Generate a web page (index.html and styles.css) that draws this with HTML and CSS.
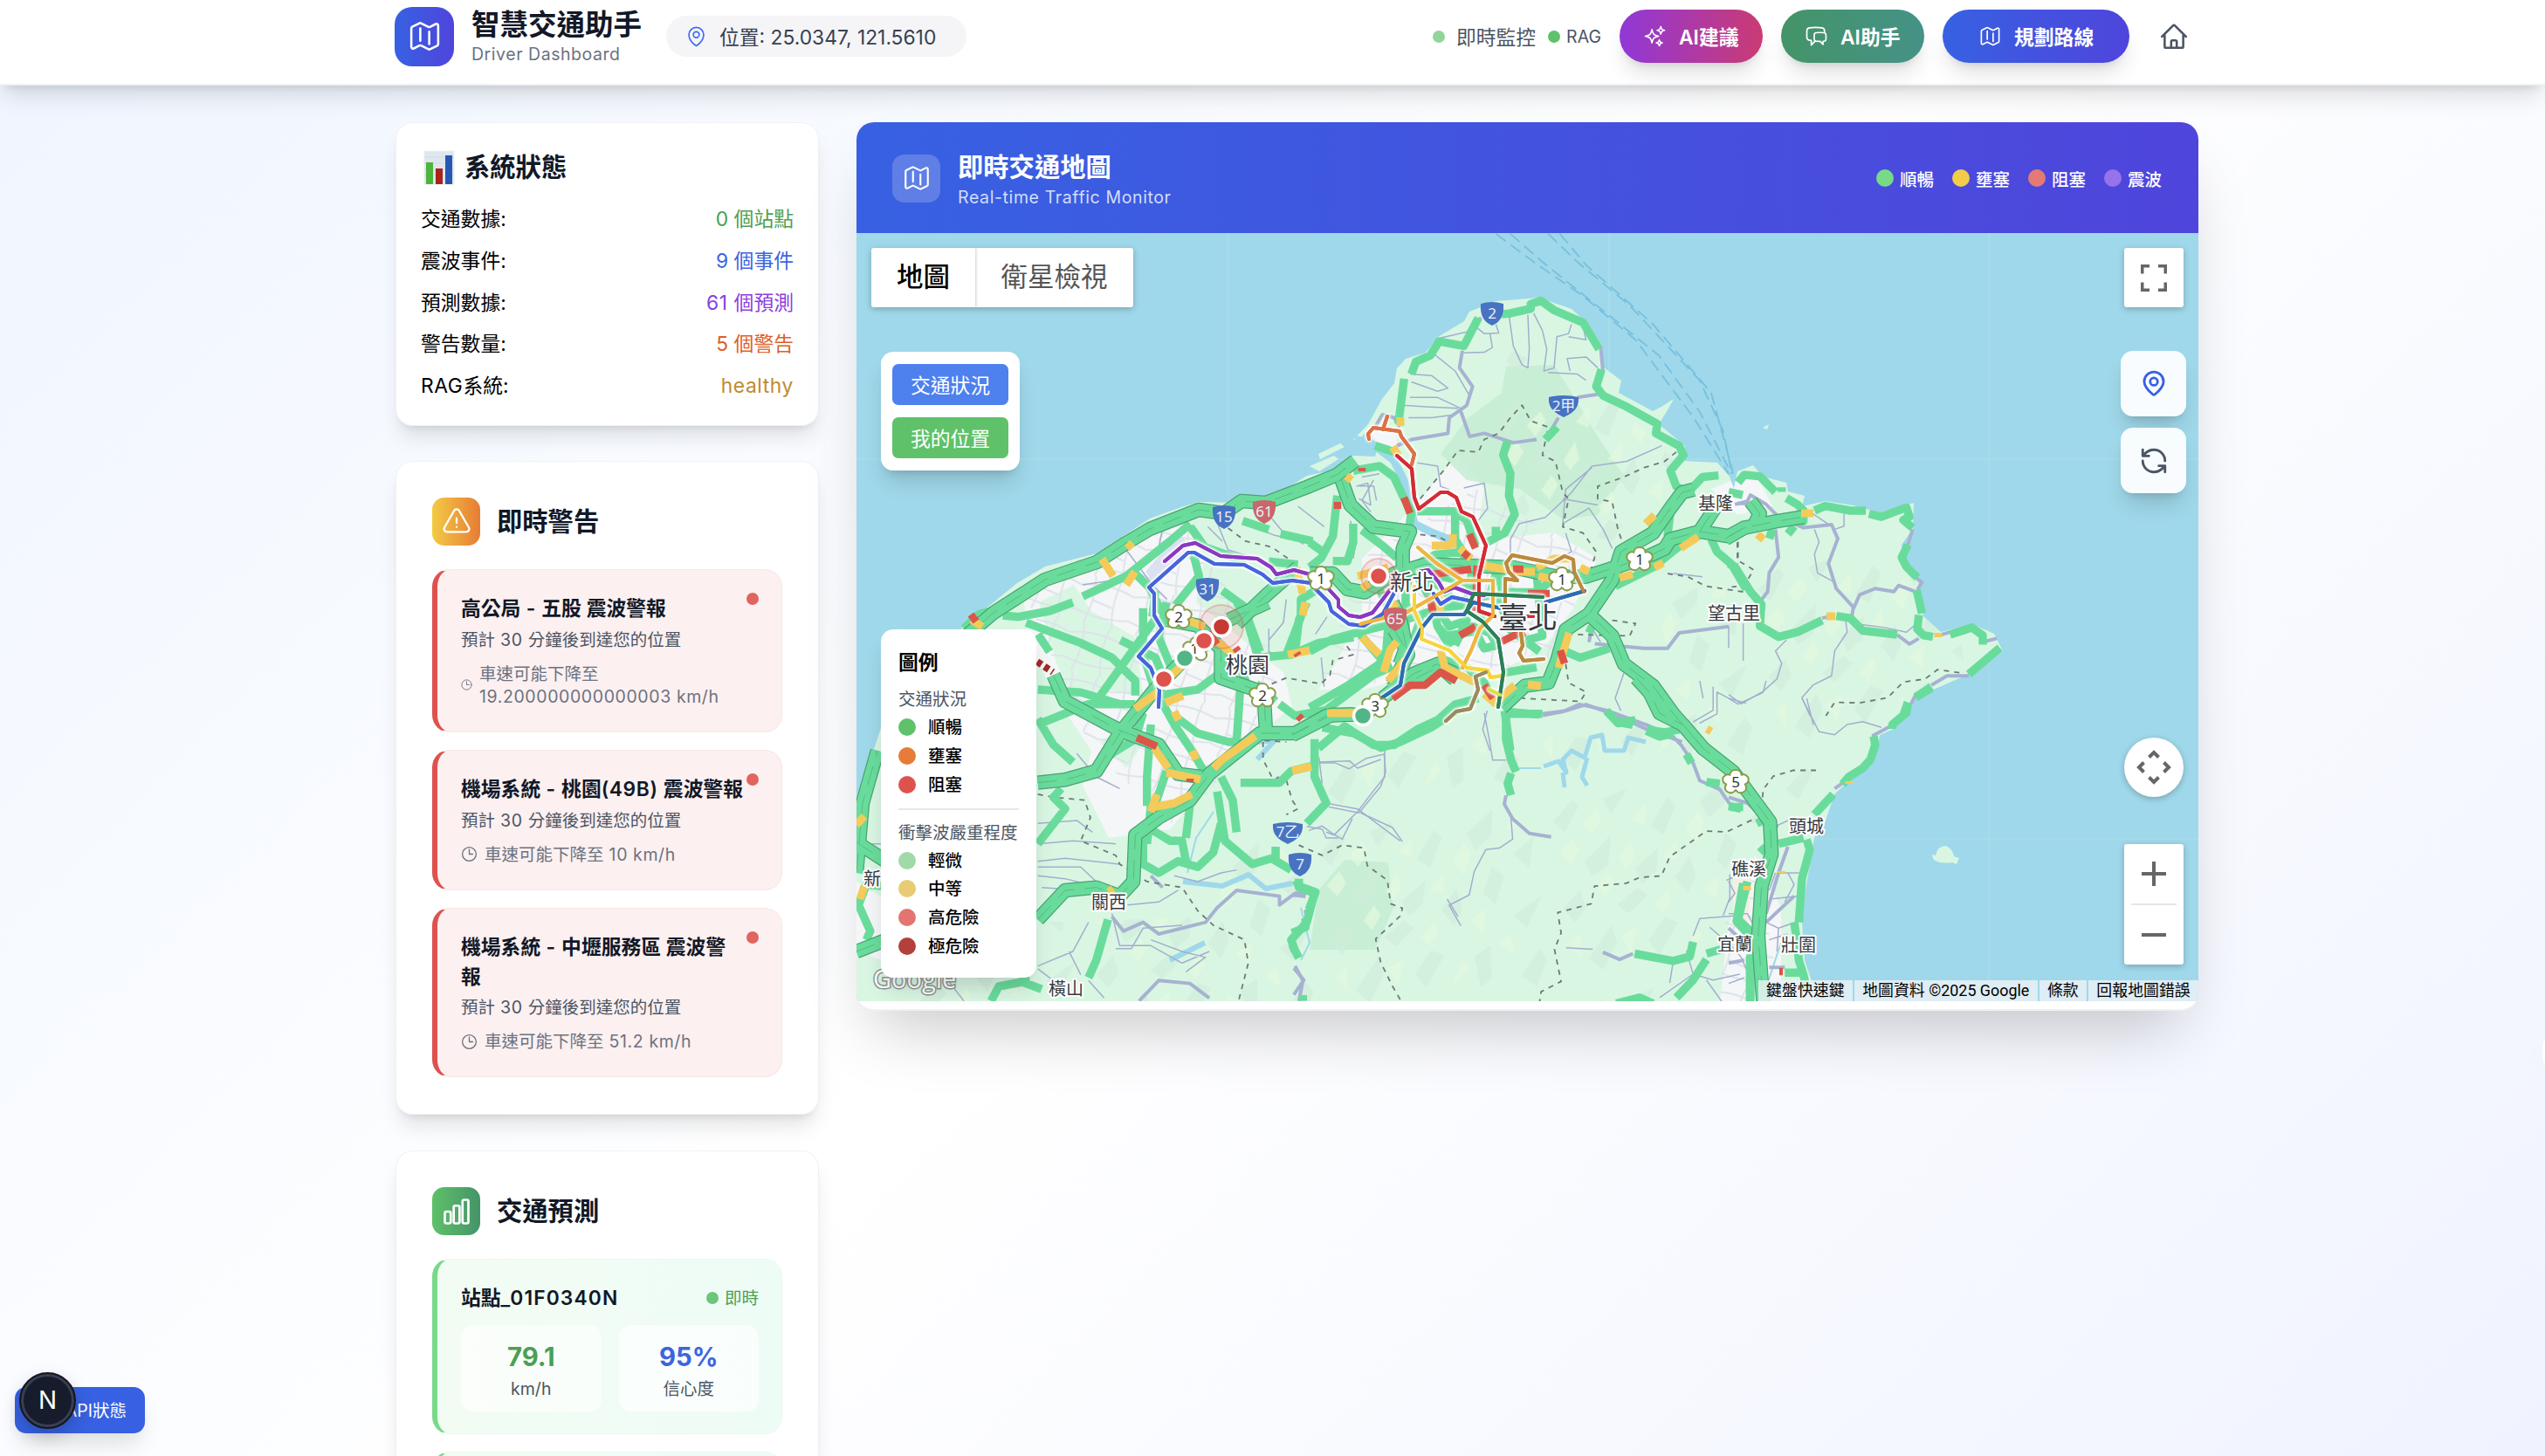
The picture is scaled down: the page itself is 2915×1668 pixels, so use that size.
FILE: index.html
```html
<!DOCTYPE html>
<html lang="zh-Hant">
<head>
<meta charset="utf-8">
<title>智慧交通助手</title>
<link rel="stylesheet" href="styles.css">
</head>
<body>
<svg class="defs" width="0" height="0" aria-hidden="true">
  <symbol id="i-map" viewBox="0 0 24 24"><path d="M9 6.75V15m6-6v8.25m.503 3.498 4.875-2.437c.381-.19.622-.58.622-1.006V4.82c0-.836-.88-1.38-1.628-1.006l-3.869 1.934c-.317.159-.69.159-1.006 0L9.503 3.252a1.125 1.125 0 0 0-1.006 0L3.622 5.689C3.24 5.88 3 6.27 3 6.695V19.18c0 .836.88 1.38 1.628 1.006l3.869-1.934c.317-.159.69-.159 1.006 0l4.994 2.497c.317.158.69.158 1.006 0Z"/></symbol>
  <symbol id="i-pin" viewBox="0 0 24 24"><path d="M15 10.5a3 3 0 1 1-6 0 3 3 0 0 1 6 0Z"/><path d="M19.5 10.5c0 7.142-7.5 11.25-7.5 11.25S4.5 17.642 4.5 10.5a7.5 7.5 0 1 1 15 0Z"/></symbol>
  <symbol id="i-spark" viewBox="0 0 24 24"><path d="M9.813 15.904 9 18.75l-.813-2.846a4.5 4.5 0 0 0-3.09-3.09L2.25 12l2.846-.813a4.5 4.5 0 0 0 3.09-3.09L9 5.25l.813 2.846a4.5 4.5 0 0 0 3.09 3.09L15.75 12l-2.846.813a4.5 4.5 0 0 0-3.09 3.09ZM18.259 8.715 18 9.75l-.259-1.035a3.375 3.375 0 0 0-2.455-2.456L14.25 6l1.036-.259a3.375 3.375 0 0 0 2.455-2.456L18 2.25l.259 1.035a3.375 3.375 0 0 0 2.456 2.456L21.75 6l-1.035.259a3.375 3.375 0 0 0-2.456 2.456ZM16.894 20.567 16.5 21.75l-.394-1.183a2.25 2.25 0 0 0-1.423-1.423L13.5 18.75l1.183-.394a2.25 2.25 0 0 0 1.423-1.423l.394-1.183.394 1.183a2.25 2.25 0 0 0 1.423 1.423l1.183.394-1.183.394a2.25 2.25 0 0 0-1.423 1.423Z"/></symbol>
  <symbol id="i-chat" viewBox="0 0 24 24"><path d="M20.25 8.511c.884.284 1.5 1.128 1.5 2.097v4.286c0 1.136-.847 2.1-1.98 2.193-.34.027-.68.052-1.02.072v3.091l-3-3c-1.354 0-2.694-.055-4.02-.163a2.115 2.115 0 0 1-.825-.242m9.345-8.334a2.126 2.126 0 0 0-.476-.095 48.64 48.64 0 0 0-8.048 0c-1.131.094-1.976 1.057-1.976 2.192v4.286c0 .837.46 1.58 1.155 1.951m9.345-8.334V6.637c0-1.621-1.152-3.026-2.76-3.235A48.455 48.455 0 0 0 11.25 3c-2.115 0-4.198.137-6.24.402-1.608.209-2.76 1.614-2.76 3.235v6.226c0 1.621 1.152 3.026 2.76 3.235.577.075 1.157.14 1.74.194V21l4.155-4.155"/></symbol>
  <symbol id="i-home" viewBox="0 0 24 24"><path d="m2.25 12 8.954-8.955c.44-.439 1.152-.439 1.591 0L21.75 12M4.5 9.75v10.125c0 .621.504 1.125 1.125 1.125H9.75v-4.875c0-.621.504-1.125 1.125-1.125h2.25c.621 0 1.125.504 1.125 1.125V21h4.125c.621 0 1.125-.504 1.125-1.125V9.75M8.25 21h8.25"/></symbol>
  <symbol id="i-warn" viewBox="0 0 24 24"><path d="M12 9v3.75m-9.303 3.376c-.866 1.5.217 3.374 1.948 3.374h14.71c1.73 0 2.813-1.874 1.948-3.374L13.949 3.378c-.866-1.5-3.032-1.5-3.898 0L2.697 16.126ZM12 15.75h.007v.008H12v-.008Z"/></symbol>
  <symbol id="i-clock" viewBox="0 0 24 24"><path d="M12 6v6h4.5m4.5 0a9 9 0 1 1-18 0 9 9 0 0 1 18 0Z"/></symbol>
  <symbol id="i-bars" viewBox="0 0 24 24"><path d="M3 13.125C3 12.504 3.504 12 4.125 12h2.25c.621 0 1.125.504 1.125 1.125v6.75C7.5 20.496 6.996 21 6.375 21h-2.25A1.125 1.125 0 0 1 3 19.875v-6.75ZM9.75 8.625c0-.621.504-1.125 1.125-1.125h2.25c.621 0 1.125.504 1.125 1.125v11.25c0 .621-.504 1.125-1.125 1.125h-2.25a1.125 1.125 0 0 1-1.125-1.125V8.625ZM16.5 4.125c0-.621.504-1.125 1.125-1.125h2.25C20.496 3 21 3.504 21 4.125v15.75c0 .621-.504 1.125-1.125 1.125h-2.25a1.125 1.125 0 0 1-1.125-1.125V4.125Z"/></symbol>
  <symbol id="i-mappin" viewBox="0 0 24 24"><path d="M19.800 10c0 4.400-5 8.700-6.900 10.300a1.500 1.500 0 0 1-1.800 0C9.200 18.700 4.200 14.400 4.200 10a7.800 7.800 0 0 1 15.600 0Z"/><circle cx="12" cy="10" r="3"/></symbol>
  <symbol id="i-refresh" viewBox="0 0 24 24"><path d="M21 12a9 9 0 0 0-9-9 9.750 9.750 0 0 0-6.740 2.740L3 8M3 3v5h5M3 12a9 9 0 0 0 9 9 9.750 9.750 0 0 0 6.740-2.740L21 16M16 16h5v5"/></symbol>
</svg>

<header class="topbar">
  <div class="topbar-inner">
    <div class="logo"><svg class="ico" width="41" height="41"><use href="#i-map"/></svg></div>
    <div class="brand"><h1>智慧交通助手</h1><p>Driver Dashboard</p></div>
    <div class="pill"><svg class="ico" width="27" height="27"><use href="#i-pin"/></svg><span>位置: 25.0347, 121.5610</span></div>
    <div class="live"><i class="dot soft"></i><span>即時監控</span></div>
    <div class="rag"><i class="dot"></i><span>RAG</span></div>
    <button class="btn violet"><svg class="ico" width="27" height="27"><use href="#i-spark"/></svg>AI建議</button>
    <button class="btn teal"><svg class="ico" width="27" height="27"><use href="#i-chat"/></svg>AI助手</button>
    <button class="btn blue"><svg class="ico" width="27" height="27"><use href="#i-map"/></svg>規劃路線</button>
    <svg class="ico home" width="34" height="34"><use href="#i-home"/></svg>
  </div>
</header>

<main class="layout">
  <aside class="side">
    <section class="card status">
      <h2><svg width="36" height="40" viewBox="0 0 36 40"><rect x="1" y="1" width="34" height="38" fill="#dfe6ee" stroke="#eceff3"/><path d="M1 8h34M1 15h34M1 22h34M1 29h34" stroke="#d2dbe4"/><rect x="3" y="14" width="8" height="25" fill="#4fb43a"/><rect x="14" y="21" width="8" height="18" fill="#a8241c"/><rect x="25" y="6" width="8" height="33" fill="#2458b4"/></svg>系統狀態</h2>
      <dl>
        <div><dt>交通數據:</dt><dd class="c-green">0 個站點</dd></div>
        <div><dt>震波事件:</dt><dd class="c-blue">9 個事件</dd></div>
        <div><dt>預測數據:</dt><dd class="c-purple"><span class="lat">61 </span>個預測</dd></div>
        <div><dt>警告數量:</dt><dd class="c-orange">5 個警告</dd></div>
        <div><dt><span class="lat">RAG</span>系統:</dt><dd class="c-amber lat">healthy</dd></div>
      </dl>
    </section>

    <section class="card panel">
      <div class="panel-head"><span class="badge warm"><svg class="ico" width="36" height="36"><use href="#i-warn"/></svg></span><h2>即時警告</h2></div>
      <article class="alert"><i class="ping"></i><h3>高公局<span class="lat"> - </span>五股 震波警報</h3><p>預計<span class="lat"> 30 </span>分鐘後到達您的位置</p>
        <div class="speed tight"><svg class="ico" width="15" height="15"><use href="#i-clock"/></svg><span>車速可能下降至<br><span class="lat">19.200000000000003 km/h</span></span></div></article>
      <article class="alert"><i class="ping"></i><h3>機場系統<span class="lat"> - </span>桃園<span class="lat">(49B) </span>震波警報</h3><p>預計<span class="lat"> 30 </span>分鐘後到達您的位置</p>
        <div class="speed"><svg class="ico" width="21" height="21"><use href="#i-clock"/></svg><span>車速可能下降至<span class="lat"> 10 km/h</span></span></div></article>
      <article class="alert"><i class="ping"></i><h3>機場系統<span class="lat"> - </span>中壢服務區 震波警<br>報</h3><p>預計<span class="lat"> 30 </span>分鐘後到達您的位置</p>
        <div class="speed"><svg class="ico" width="21" height="21"><use href="#i-clock"/></svg><span>車速可能下降至<span class="lat"> 51.2 km/h</span></span></div></article>
    </section>

    <section class="card panel">
      <div class="panel-head"><span class="badge leaf"><svg class="ico bold" width="36" height="36"><use href="#i-bars"/></svg></span><h2>交通預測</h2></div>
      <article class="forecast">
        <div class="forecast-head"><h3>站點<span class="lat code">_01F0340N</span></h3><span class="now"><i class="dot"></i>即時</span></div>
        <div class="metrics">
          <div><b class="c-green">79.1</b><small>km/h</small></div>
          <div><b class="c-blue">95%</b><small>信心度</small></div>
        </div>
      </article>
      <article class="forecast next"></article>
    </section>
  </aside>

  <section class="mapcard">
    <div class="map-head">
      <span class="badge glass"><svg class="ico" width="34" height="34"><use href="#i-map"/></svg></span>
      <div class="map-title"><h2>即時交通地圖</h2><p>Real-time Traffic Monitor</p></div>
      <ul>
        <li><i style="background:#78da86"></i>順暢</li>
        <li><i style="background:#f2cd49"></i>壅塞</li>
        <li><i style="background:#e47a73"></i>阻塞</li>
        <li><i style="background:#9673ea"></i>震波</li>
      </ul>
    </div>
    <div class="map">
      <svg class="canvas" viewBox="981 267 1537 880" width="1537" height="880">
        <defs>
          <clipPath id="land-clip"><use href="#land"/></clipPath>
          <pattern id="facets" width="270" height="230" patternUnits="userSpaceOnUse" patternTransform="rotate(-8)">
            <path fill="#cfebda" opacity=".6" d="M10 30l26-22 6 8-20 28ZM70 12l30-8-22 26ZM120 50l24-30 8 10-18 32ZM40 80l34-26-8 34-20 10ZM96 96l30-20-6 26-18 12ZM8 130l22-18 4 20-14 16ZM70 134l26-16 10 10-24 18ZM140 112l20-22 4 24-12 18ZM180 30l34-24-6 30-20 14ZM230 60l26-16-10 34ZM190 100l14-30 12 14-14 30ZM220 130l36-18-22 34ZM30 190l30-34 4 20-20 30ZM100 180l22-24 14 8-26 34ZM170 170l20-10-4 38-14 8ZM220 200l24-28 8 12-16 30Z"/>
            <path fill="#e2f8df" opacity=".75" d="M44 36l18-14 4 12-14 16ZM100 40l18-16-4 24ZM14 66l16-14 6 14-12 14ZM80 82l16-20 2 20-12 12ZM130 88l18-18-2 22ZM50 112l14-16 6 12-12 16ZM112 140l18-16 2 14-12 12ZM160 60l16-20 6 14-12 22ZM224 30l16-14 4 16ZM170 130l20-12-6 26ZM70 170l20-8-12 30ZM140 200l16-28 6 12ZM200 160l14-10 2 24ZM10 170l14-10-4 30Z"/>
          </pattern>
          <pattern id="streets" width="62" height="56" patternUnits="userSpaceOnUse" patternTransform="rotate(14)">
            <path d="M0 14Q30 4 62 14M0 42Q30 50 62 42M14 0Q20 28 12 56M44 0Q38 30 46 56M16 28L40 32" fill="none" stroke="#dce2e9" stroke-width="1.800"/>
          </pattern>
          <g id="flower"><path d="M0-17c5 0 8 3 8 7 5-2 10 2 10 6s-2 6-5 7c3 4 2 9-2 11s-8 1-11-3c-3 4-7 5-11 3s-5-7-2-11c-3-1-5-3-5-7s5-8 10-6c0-4 3-7 8-7Z" fill="#fff" stroke="#8a9d4c" stroke-width="2"/></g>
          <g id="shield"><path d="M-13-11Q0-15 13-11C14 3 9 10 0 14-9 10-14 3-13-11Z"/></g>
          <g id="shield-wide"><path d="M-17-10Q0-14 17-10C18 3 10 8 0 13-10 8-18 3-17-10Z"/></g>
        </defs>
        <rect x="981" y="267" width="1537" height="880" fill="#9fd8ea"/>
        <path class="grid" d="M1407 267V1147M1843 267V1147M2278 267V1147M981 526H2518M981 961H2518"/>
        <g class="ferry" transform="translate(1500 300) scale(.3333 .3571)"><path d="M640-90L770 0 940 110 1120 250 1320 500 1440 680M690-90L800 0 960 120 1200 300 1340 480 1450 680M820-90L920 0 1100 140 1340 380 1420 540 1452 680M860-90L950 10 1180 200 1380 420 1456 680"/></g>
        <path id="land" fill="#d9f6e3" d="M981 1147V925L994 880 1020 800 1060 750 1099 722 1113 710 1138 690 1165 668 1197 649 1256 634 1290 612 1317 594 1353 581 1373 575 1419 576 1460 568 1497 545 1531 538 1550 522 1575 523 1578 512 1550 504 1567 486 1583 457 1597 439 1600 422 1610 411 1633 404 1647 386 1677 368 1683 357 1713 345 1763 341 1800 354 1820 372 1835 396 1837 421 1857 436 1854 450 1893 471 1903 466 1917 457 1911 468 1900 486 1930 511 1929 528 1967 530 1981 546 1986 560 1990 540 2008 533 2019 546 2046 553 2048 563 2067 568 2064 580 2091 574 2123 579 2155 588 2192 576 2191 606 2178 624 2180 650 2198 666 2196 678 2203 706 2223 724 2259 715 2284 726 2294 746 2251 774 2194 799 2187 810 2169 835 2153 842 2151 856 2119 893 2101 910 2091 940 2078 960 2068 1020 2064 1057 2067 1100 2078 1133 2080 1147Z"/>
        <path fill="#d9f6e3" d="M2213 979l4 1q2-11 12-11 8 4 9 12l6 2-3 7-5-2q-16 2-22-4ZM2019 490l7-4-2 6ZM1510 520l25-12 5 4-28 14ZM1500 534l28-12 5 4-22 14Z"/>
        <g clip-path="url(#land-clip)">
          <g fill="#f5f6f7">
            <path d="M1170 670L1260 640 1350 590 1380 640 1370 690 1420 730 1470 770 1480 810 1430 850 1390 890 1340 950 1270 960 1240 900 1250 860 1210 800 1180 740Z"/>
            <path d="M1560 640L1620 580 1670 520 1700 560 1690 620 1780 610 1830 640 1800 700 1770 740 1700 780 1640 770 1560 790 1510 790 1530 760 1560 700Z"/>
            <path d="M1960 560L2010 540 2030 580 1990 590ZM1980 1060L2010 980 2040 1040 2040 1147 1970 1147ZM981 1010L1030 1040 1010 1100 981 1090ZM1565 490L1600 490 1600 520 1580 510Z"/>
          </g>
          <path fill="#d9f6e3" d="M1190 690L1230 670 1250 700 1300 730 1310 800 1270 790 1230 800 1210 760ZM1290 830L1310 850 1290 880 1260 850ZM1395 600L1440 640 1400 650Z"/>
          <path fill="url(#streets)" d="M1170 670L1350 590 1470 770 1430 850 1350 950 1250 860ZM1560 640L1690 560 1830 640 1770 760 1510 790ZM1975 1060L2010 980 2040 1147 1970 1147Z"/>
          <path fill="#c3edd1" opacity=".8" d="M1725 420L1780 418 1800 450 1830 500 1860 545 1830 590 1790 595 1740 560 1680 550 1650 520 1680 480 1720 450ZM1540 985L1590 988 1596 1040 1575 1088 1500 1088 1510 1020Z"/>
          <path fill="url(#facets)" d="M1730 400L1860 470 1930 540 1900 600 1850 620 1760 600 1670 540ZM1440 1147L1380 1010 1480 930 1530 860 1700 830 1850 850 1920 800 1900 700 2030 620 2230 640 2250 760 2100 850 2050 960 2000 940 1960 1040 1940 1147ZM1050 1147L1090 1060 1400 1050 1500 1147Z"/>
          <path fill="#dce0f3" d="M1312 655L1350 610 1362 625 1325 672Z"/>
          <path fill="#f4efe5" d="M1985 1005L2005 1000 2003 1060 1985 1060Z"/>
        </g>

        <!-- water courses -->
        <g class="water" fill="none">
          <path stroke-width="9" d="M1552 503L1590 515 1608 550 1620 600 1640 610 1665 620M1560 500L1600 530"/>
          <path stroke-width="5" d="M1768 878L1785 872 1794 885 1790 870 1800 860 1815 868 1822 845 1835 842 1838 860 1860 860 1865 845 1885 850M1818 868L1812 890 1818 900M1790 885L1792 902"/>
          <path stroke-width="6" d="M1355 1010L1400 1015 1430 1002 1450 1018 1480 1012M1440 850L1460 848 1440 870M1340 1100L1380 1080"/>
          <path stroke-width="2" d="M1360 1000L1370 960 1390 930M1490 1040L1500 1080 1490 1100M1740 880L1765 880M2020 1140L2040 1080"/>
        </g>

        <!-- rural roads -->
        <g class="thin">
          <g transform="translate(1500 300) scale(.3333 .3571)"><path d="M445 245L540 225 575 190M560 200L600 230 650 228 640 200M620 230L628 275 600 290 530 292M685 170L700 270 730 330 750 340 755 280 750 170M770 165L800 220 815 280 805 350 840 340 850 240 890 230 900 200M890 240L950 250 940 210M895 350L885 310 950 305 990 340M950 380L920 360 820 355M345 360L420 365 475 405 440 415 350 385M420 290L500 350 550 430M345 435L440 435 520 470M320 460L400 465 510 470M340 500L420 500 500 490M370 645L440 655 450 720 480 730M160 720L200 710 210 780 170 760M240 680L180 690M530 725L600 710 612 790 580 830M690 890L720 840 810 820 900 740 970 655 1090 640 1210 590M970 660L880 730 870 840 960 790 1010 860 1040 920M870 760L990 780M1250 1000L1350 1010M1000 1220L960 1160M690 890L690 940M880 870L900 930 860 950M610 1440L595 1500 620 1568M1490 1160L1490 1280M1080 1320L1050 1400 1070 1440M1340 1480L1400 1450 1400 1380 1440 1400 1500 1416"/></g>
          <g transform="translate(1980 260) scale(.3571)"><path d="M275 970L290 1010 275 1050 285 1110 340 1140M370 920L370 960 340 970M270 920L330 960M375 1260L380 1300 340 1360 330 1440 270 1470 235 1510 262 1570M185 1325L150 1360 170 1400 155 1450 110 1490 40 1530 0 1500M420 1275L500 1285 570 1300 600 1275M0 1280V1350"/></g>
          <g transform="translate(1980 780) scale(.3571 .3333)"><path d="M120 0L110 40 30 80 0 60M235 60L290 175 340 185 380 150 430 140 490 160M160 660L240 660M150 660L130 720M130 750L220 740M120 830L160 850 240 820M130 890L190 870M160 850L155 930M190 660L210 700 180 760M150 500L190 480M0 800L60 800 90 860M0 900L40 950 60 1000M0 1040L50 1020M0 690L20 730 0 760"/></g>
          <g transform="translate(970 690) scale(.4464 .3333)"><path d="M490 890L560 880 700 900M490 910L600 910 640 960M490 940L560 950 680 990M500 980L600 990M490 760L590 750 630 790M590 520L640 600 700 640M490 830L580 820 690 830M680 1070L700 1180 780 1180 860 1240 930 1200M690 1190L730 1190 760 1120 860 1110M780 1160L860 1200 920 1220 870 1270M490 1260L530 1300M620 1100L580 1200 490 1250M570 1200L600 1280M1200 550L1290 545 1310 570 1370 540M1380 510L1380 600 1350 650 1310 720 1250 800 1230 790M1230 690L1310 710 1420 820M1180 770L1220 780 1230 810 1260 810M840 940L900 960 960 930 1000 920M720 1040L800 1030 850 990M850 820L780 790M1540 1020L1568 1080M620 1300L660 1360M260 1300L300 1370M30 830L90 830"/></g>
          <g transform="translate(1480 780) scale(.3827 .336)"><path d="M575 110L590 200 600 270 640 270M655 470L660 540 620 570 580 575 545 650 530 730 470 765 505 835M80 280L130 280 170 300 220 265 275 250 280 310 265 360 200 450 110 430M205 450L300 500 330 548M180 470L150 540 120 520 90 495 50 510M80 260L90 350M1260 20L1260 100 1200 140M1230 60L1220 0M1540 60L1560 150M1200 870L1220 810 1340 800M1180 920L1200 1000 1100 1080M1140 960L1130 1030M1250 840L1310 900M1200 1000L1260 1020 1340 1000M1240 1020L1290 1100M1310 660L1310 740 1290 800M820 910L900 915M1340 660L1300 680"/></g>
          <g transform="translate(1240 520) scale(.3333)"><path d="M150 330L240 450 290 500M180 290L340 240M430 250L480 300M280 230L260 330M460 230L500 330 600 360M640 210L690 270 760 310M560 240L660 280 800 310M740 180L830 250M920 230L940 300 930 360M950 110L1000 110 1010 160M1000 90L960 160 990 200M0 450L200 420M640 600L640 680 700 700M700 500L690 580 640 640M800 620L840 560M820 700L830 800M870 820L860 880"/></g>
        </g>
        <g class="rural">
          <g transform="translate(1500 300) scale(.3333 .3571)"><path d="M525 285L515 340 560 400 540 460 480 500 475 550 350 570 300 590M520 480L550 560 600 550 700 580 780 570M590 180L570 190M850 155L920 180M1000 270L1008 350M920 435L990 425M855 500L830 540M225 530L250 490 290 500 310 530M980 1225L1150 1240 1230 1240 1270 1190 1440 1170M970 1170L960 1220M800 1450L880 1440 950 1420 1040 1450 1160 1500 1280 1540M1470 775L1510 775"/></g>
          <g transform="translate(1980 260) scale(.3571)"><path d="M20 890L60 880 70 860 120 890 160 930 240 965 330 955 350 1000 320 1080 345 1160 400 1220 395 1250M150 970L160 1060 130 1110 125 1170 95 1210M400 1225L420 1180 470 1160 530 1170 545 1150 600 1170M590 970L575 1020M600 1125L620 1140 605 1165M540 1308L580 1338 610 1320M300 1255L330 1248M680 1308L710 1300M820 1330L860 1320M770 1440L700 1440 650 1470M600 1500L585 1530"/></g>
          <g transform="translate(1980 780) scale(.3571 .3333)"><path d="M520 155L460 190M380 340L340 370M190 570L160 660 120 800M120 830L210 740M0 970L50 960M130 985L180 985M70 920L0 850M160 500L130 490 60 420 0 400"/></g>
          <g transform="translate(970 690) scale(.4464 .3333)"><path d="M680 1080L710 1130 760 1100 800 1140 920 1100 950 1050 1000 990 1110 1010 1110 1040 1150 1000 1180 1000M1150 1250L1170 1300 1160 1370M750 1370L800 1300 880 1310 930 1360M780 940L810 980M1085 625L1110 600M860 820L840 810"/></g>
          <g transform="translate(1480 780) scale(.3827 .336)"><path d="M750 118L810 105 860 80 940 100 1060 150 1140 190 1165 220 1200 280 1220 340 1280 370 1310 420M640 390L635 420 660 470 710 520 775 532M930 925L980 950 1020 930M0 730L40 735M40 780L45 820M5 980L35 1020 5 1070"/></g>
        </g>
        <g class="border">
          <g transform="translate(1500 300) scale(.3333 .3571)"><path d="M380 760L460 670 510 605 580 610 600 570 650 550 690 500 730 460 760 510 820 530 800 620 845 640 870 740 890 760 870 850 940 870 985 930 960 1010M1260 610L1220 640 1150 660 1080 690 990 720 990 760 1040 770 1060 860 1075 900M1230 1000L1300 1010 1360 1040 1500 1060M1040 1150L1120 1160 1100 1200 900 1195M880 1290L890 1350 950 1380 930 1410 730 1400M380 875L440 880 500 910M1470 900L1470 970"/></g>
          <g transform="translate(1980 260) scale(.3571)"><path d="M740 1430L670 1420 630 1450 560 1460 510 1510 420 1527 340 1525 312 1568M30 1010L30 1070 80 1100 50 1150 10 1155"/></g>
          <g transform="translate(1480 780) scale(.3827 .336)"><path d="M1568 305L1500 305 1440 325 1410 370 1405 430M1375 475L1300 515 1240 512 1130 600 1105 665 1040 670 1000 690 905 700 895 760 795 790 805 860 785 915 805 1025 745 1060 740 1100M20 560L90 595 150 560 215 570 225 630 285 680 295 760 330 775 325 800 250 880 265 960 300 1040 330 1100"/></g>
          <g transform="translate(1240 520) scale(.3333)"><path d="M500 255L560 300 650 320 720 370 740 410M650 790L700 770 820 790 850 760 860 710 930 690 900 650M625 985L700 990M620 990L620 1050 650 1110 700 1120 720 1190 740 1220 700 1240"/></g>
          <g transform="translate(970 690) scale(.4464 .3333)"><path d="M490 660L530 670 610 680 625 740 600 820 690 870 700 900 770 960 860 980 900 1060 940 1110 1020 1160 1030 1240 1005 1370"/></g>
        </g>

        <!-- traffic layer: local arterials -->
        <g class="arterial">
          <g transform="translate(1500 300) scale(.3333 .3571)"><path d="M305 520L325 375M350 360L365 320 415 300 445 255 530 270 580 180M660 168L690 165 760 150 760 135 795 125 840 155 940 195 995 280M1003 345L985 400 1010 430 1090 465 1195 520 1190 550 1270 590 1285 620 1240 670 1260 720 1300 740 1350 690 1405 685M680 575L665 620 690 680 685 750 705 810 670 870 610 900M640 850L640 880M225 590L290 610M810 570L850 530M150 670L240 655 290 690 320 750 350 800 340 870M370 800L500 800 500 890 540 950M500 800L540 830 570 910M180 860L250 910 300 950M150 840L150 900 130 960 80 960M95 750L80 880 40 950 0 980M0 900L60 940M1240 800L1230 880M1300 890L1180 980 1050 1040M1380 890L1400 930 1450 970 1500 1050M350 980L330 1060 330 1180 310 1280M360 990L420 1090 440 1170 480 1230M240 1050L300 1170 340 1230M0 1250L80 1210 200 1180 290 1160 420 1120M170 1190L260 1290M270 1170L260 1290M0 1430L130 1360 240 1290 300 1180M400 1000L500 1090 620 1070 640 1000 650 960M560 980L540 1100 460 1110M660 990L660 1060 780 1060 860 1000M780 1000L800 1200 720 1220M640 1060L690 1180 790 1250M470 1230L560 1170 620 1190 650 1240M440 1270L540 1300 600 1350 640 1420M660 1320L780 1300M440 1170L470 1200 600 1180M580 1100L600 1170M350 980L430 940 520 930 560 980M440 1110L480 1170 540 1150 500 1230M400 1040L460 1010 540 1030M330 1100L380 1150 350 1230M560 1170L600 1240 640 1230M30 1560L120 1490 220 1550 290 1550 370 1500 440 1470 500 1420 580 1400M670 1440L690 1568M680 1450L800 1450M1020 1440L1060 1480 1120 1470M1160 1500L1220 1510 1270 1500M880 1250L930 1270 1030 1240M960 1190L970 1170"/></g>
          <g transform="translate(1980 260) scale(.3571)"><path d="M30 820L50 795 100 800 150 850M170 835V850M185 870L220 890 240 910 240 945 210 945M275 910L310 895 390 910 440 910M450 920L490 930 570 900 580 930 560 940 590 965M575 1020L555 1060 570 1090 605 1125M603 1165L620 1240M610 1245L605 1290 625 1310 655 1315M0 1080L20 1090 70 1170 105 1210 100 1280 160 1315 220 1300 300 1262M345 1248L390 1255 430 1295 540 1308M710 1308L780 1285 815 1310 815 1340M770 1435L870 1350M600 1510L650 1475M575 1525L560 1568M190 985L210 960M0 850L45 860M130 1000L140 970"/></g>
          <g transform="translate(1980 780) scale(.3571 .3333)"><path d="M600 55L650 25M575 75L570 110 525 150 525 165M465 190L470 220 455 270 430 300 385 330 365 355M335 390L275 460M250 545L260 580 235 680 225 830M210 830L220 900 225 960 240 1010 250 1060M180 1003L240 1003M160 560L240 540M60 690L30 820 70 860M70 940V1100M0 430L40 440M90 490L110 480M100 590L120 570"/></g>
          <g transform="translate(970 690) scale(.4464 .3333)"><path d="M300 90L340 40 400 20M400 45L440 50 520 30 580 0M460 70L600 140 680 190 740 270 740 320M490 110L520 170M790 60L640 340M490 300L600 310 700 350 740 350M490 420L620 350 720 350M490 400L530 490 580 550M820 0L800 120 840 250M760 20L760 180 790 300 840 420 890 520 920 590M850 400L900 450 980 480 1000 480M800 320L900 300 950 250M1010 280L1000 480M780 420L770 600 770 700M820 580L790 700M760 380L740 470 680 520 650 560M960 600L990 680 1000 790M950 650L970 820 1040 900 1090 880 1140 920M1010 620L1060 620 1110 620 1140 580 1200 560M1200 470L1200 600 1230 690 1180 760 M1100 840L1100 880M760 790L760 900 800 930 850 890 900 910 940 860 960 760M780 780L830 820 860 820 870 890M880 700L870 810M770 830L780 700M490 830L560 710 530 670 550 640M1060 190L1140 180 1210 140 1300 120M1110 350L1150 390 1230 370 1350 250 1400 220M1060 170L1030 60 1000 0M1150 170L1160 60 1180 0M1220 430L1300 450 1370 500 1420 480 1500 430 1568 370M1160 950L1160 980 1200 1000 1180 1100 1140 1160 1150 1200M670 1090L640 1230 620 1290M440 1300L500 1330M370 1370L390 1320 470 1300M120 980L50 970 30 1040 60 1130 50 1160M1170 1350V1370M1050 280L1100 340M1010 230L1030 290"/></g>
          <g transform="translate(1480 780) scale(.3827 .336)"><path d="M640 120L640 200 655 270 670 310M655 315L645 350 655 390M640 105L740 115M970 140L1020 150M1060 170L1100 190 1140 180M1240 345L1280 350M1310 430L1350 430M1180 250L1195 280M1025 930L1140 955 1190 940 1200 890M1240 930L1300 910M1240 950L1200 1020 1150 1080M970 1100L1040 1080 1080 1100M1350 690L1330 820 1370 870M1370 940V1100M0 860L40 840 40 810M10 680L20 700 70 720 50 780M0 900L20 945"/></g>
          <g transform="translate(1240 520) scale(.3333)"><path d="M170 400L230 460 270 540 330 560M380 340L400 420 320 520M480 470L550 520 600 690M130 640L250 700 290 800M700 690L750 560 750 500 800 470M0 490L150 420 300 300 370 240M370 250L420 320 560 370M550 230L640 260M680 275L790 300M640 370L740 380M250 470L240 560"/></g>
        </g>

        <!-- traffic layer: motorways -->
        <g class="casing"><use href="#motorways"/></g>
        <g class="motorway"><g id="motorways">
          <path d="M1099 735L1138 702 1197 664 1256 644 1290 622 1317 606 1373 584 1402 588 1422 574 1450 576 1497 558 1531 544 1552 528"/>
          <path d="M981 1000L988 920 1005 860M981 965L1020 990M981 1090L1012 1078"/>
          <g transform="translate(1500 300) scale(.3333 .3571)"><path d="M110 700L140 780 220 850 345 865 320 920 320 980M-250 1160L-150 1070 -40 980M0 1000L80 1000 130 1050 190 1060 290 1000 400 970 560 975 700 980 850 1010 950 1010 1050 980 1150 950 1220 920 1240 890 1340 865 1400 780M960 1130L1040 1020 1070 930 1180 870 1240 790 1280 740 1320 730M1340 865L1440 880 1500 850M660 1430L740 1360 820 1350 850 1280 880 1180 960 1130 1040 1200 1080 1290 1180 1360 1250 1450 1360 1568M250 1400L360 1320 440 1290 500 1340M290 1180L330 1240 310 1290"/></g>
          <g transform="translate(1980 260) scale(.3571)"><path d="M-10 1000L50 965 150 945 240 930M70 880L100 920 85 950"/></g>
          <g transform="translate(1480 780) scale(.3827 .336)"><path d="M1030-10L1070 40 1100 110 1170 150 1230 230 1320 310 1430 480 1435 590 1405 700 1395 870 1410 1100M0 185L60 150 120 115 200 115"/></g>
          <g transform="translate(970 690) scale(.4464 .3333)"><path d="M490 620L560 610 640 580 700 450 790 300 920 120M530 250L560 340 700 440 800 490 850 590 910 600M490 1090L560 990 640 980 700 1010 735 960 740 800 800 740 880 680 930 590 1060 450 1150 450 1230 390 1300 385M820 60L900 80 960 160 960 260 1070 310 1075 440M1400 0L1420 60 1440 180 1400 280M1390 300L1420 290 1520 220 1568 250M980 60L1080 0"/></g>
        </g></g>
        <g class="median"><use href="#motorways"/></g>

        <!-- slow and jammed stretches -->
        <g class="slow">
          <path d="M1542 545L1548 550M1113 710L1125 718M1291 622L1297 628M1604 478V488M1595 512L1602 522M1560 674L1568 668M1555 660L1590 650M1640 625L1662 625M1664 612V628M1672 628L1685 640M1700 648L1740 655 1758 655M1762 660L1800 668M1810 650L1820 655M1855 662L1870 658M1895 650L1905 645M1925 628L1945 615M1585 770L1592 745 1600 735M1650 745L1655 765 1690 782M1700 795L1712 805 1735 785M1750 784L1765 786M1785 765L1797 725M1610 755L1590 780M1648 680L1650 700M1600 690L1590 700M1350 707L1380 718M1395 735L1412 750M1353 763L1335 780M1330 790L1300 812M1335 805L1355 797M1322 857L1338 880M1336 885L1375 893M1390 880L1400 870 1438 843M1365 910L1345 920 1320 925M1325 910L1318 930M1520 817H1552M1560 730L1580 750M1485 650L1492 680M1495 690L1492 705M1475 750L1500 745M2063 588H2077M2013 612L2020 618M2092 706H2102M2220 725V730M2118 895V898M2040 1000V998M1262 640L1275 660M1300 655L1290 670M1885 600L1895 590M1955 835L1960 838M2001 1015V1020M1270 1022L1275 1018M981 945L990 935M985 1030L990 1015M1480 883L1502 878M1345 815L1350 825M1366 860L1370 870M1760 650L1780 640 1800 640"/>
        </g>
        <g class="jam">
          <path d="M1595 800L1615 785 1632 785 1650 770 1668 780M1640 658L1685 652M1733 652L1745 652M1302 845L1325 855M1384 724L1394 738M1363 892V896M1608 570L1615 588M1683 612L1690 628M1676 633L1682 638M1532 575V583M1700 785L1710 800M1787 745L1792 760M1637 682L1642 705M1725 700L1745 730M1672 728L1690 718M1720 735L1740 725M1692 648L1690 700M1750 680H1775M1487 820L1491 824M1485 748L1487 751M1560 536V540M1415 742L1418 746M2038 1113L2042 1113M1112 704L1118 712"/>
        </g>
        <path stroke="#a02c28" stroke-width="8" stroke-dasharray="6 4" fill="none" d="M1188 758L1206 770"/>

        <!-- metro lines -->
        <g class="metro-case"><use href="#metro"/></g>
        <g class="metro" id="metro">
          <path stroke="#8a39c0" d="M1334 643L1355 625 1369 622 1398 637 1440 640 1456 650 1462 658 1482 653 1504 659M1521 674L1533 687 1533 695 1545 705 1558 707 1572 702 1592 676M1625 655L1636 653 1648 667 1654 678 1666 673 1685 680 1700 682"/>
          <path stroke="#4665dc" d="M1327 810L1328 790 1318 765 1304 752 1331 720 1322 705 1322 680 1316 673 1361 633 1368 633 1391 646 1425 647 1446 658 1458 668 1480 665 1502 668M1507 675L1522 690 1525 700 1545 715 1562 717 1584 703 1602 670M1642 680L1650 692 1663 684 1682 688"/>
          <path stroke="#2c6cb4" d="M1582 800L1604 785 1608 760 1628 720 1641 704 1677 704 1687 690 1720 697M1770 690L1815 677"/>
          <path stroke="#d52b35" d="M1600 522L1617 537 1620 570 1625 583 1650 564 1658 564 1668 570 1674 586 1687 592 1702 625 1694 660 1694 700 1712 706M1740 706H1756"/>
          <path stroke="#dd7146" d="M1589 477L1584 492M1568 503L1567 497 1573 490 1603 494 1605 500 1620 520 1617 532"/>
          <path stroke="#ecb641" d="M1624 627L1645 645 1675 665 1710 665 1710 705 1695 720 1685 745 1675 765M1675 665L1640 685 1610 702 1565 713 1558 715"/>
          <path stroke="#f6d53c" d="M1620 672V700L1629 720 1628 732 1660 745 1680 765 1704 768 1707 776 1722 774"/>
          <path stroke="#bb8a3d" d="M1724 690V663L1738 665 1728 655 1725 645 1732 636 1778 645 1792 637 1802 641 1803 655 1814 678M1742 725L1744 740 1740 748 1745 757 1768 755"/>
          <path stroke="#2c8059" d="M1767 684L1688 680 1680 700 1698 712 1716 732 1722 770 1716 810"/>
          <path stroke="#9a8a5c" d="M1656 826L1668 815 1684 812 1693 790 1690 775 1702 770"/>
          <path stroke="#d9e24a" d="M1706 790L1718 796"/>
        </g>

        <!-- shields and place names -->
        <g class="shields" fill="#4773c2">
          <use href="#shield" x="1709" y="359"/><use href="#shield-wide" x="1791" y="465"/><use href="#shield" x="1402" y="592"/><use href="#shield" x="1383" y="675"/><use href="#shield-wide" x="1475" y="954"/><use href="#shield" x="1489" y="990"/>
          <g fill="#c9676a"><use href="#shield" x="1448" y="586"/><use href="#shield" x="1598" y="709"/></g>
        </g>
        <g class="flowers"><use href="#flower" transform="translate(1513 663) scale(.82)"/><use href="#flower" transform="translate(1789 664) scale(.82)"/><use href="#flower" transform="translate(1878 641) scale(.82)"/><use href="#flower" transform="translate(1350 707) scale(.82)"/><use href="#flower" transform="translate(1446 797) scale(.82)"/><use href="#flower" transform="translate(1370 744) scale(.82)"/><use href="#flower" transform="translate(1575 809) scale(.82)"/><use href="#flower" transform="translate(1988 896) scale(.82)"/></g>
        <g class="num white"><text x="1709" y="358">2</text><text x="1791" y="464">2甲</text><text x="1402" y="591">15</text><text x="1448" y="585">61</text><text x="1383" y="674">31</text><text x="1598" y="708">65</text><text x="1475" y="952">7乙</text><text x="1489" y="989">7</text></g>
        <g class="num"><text x="1513" y="662">1</text><text x="1789" y="663">1</text><text x="1878" y="640">1</text><text x="1350" y="706">2</text><text x="1446" y="796">2</text><text x="1368" y="742">1</text><text x="1575" y="808">3</text><text x="1988" y="895">5</text></g>
        <g class="places">
          <text x="1617" y="665" style="font-size:25px">新北</text><text x="1750" y="705" style="font-size:34px">臺北</text><text x="1429" y="760" style="font-size:25px">桃園</text>
          <text x="1965" y="575">基隆</text><text x="1986" y="701">望古里</text><text x="2069" y="945">頭城</text><text x="2003" y="994">礁溪</text><text x="1987" y="1080">宜蘭</text><text x="2060" y="1081">壯圍</text><text x="1270" y="1032">關西</text><text x="1221" y="1131">橫山</text><text x="999" y="1005">新</text>
        </g>
        <g class="halo"><circle cx="1399" cy="718" r="25"/><circle cx="1579" cy="660" r="20"/></g>
        <g class="markers"><circle cx="1579" cy="660" r="10.500" fill="#dd524c"/><circle cx="1399" cy="718" r="10.500" fill="#c63a33"/><circle cx="1379" cy="734" r="10.500" fill="#dd524c"/><circle cx="1357" cy="754" r="10.500" fill="#52b586"/><circle cx="1333" cy="778" r="10.500" fill="#dd524c"/><circle cx="1561" cy="820" r="10.500" fill="#52b586"/></g>
        <text class="gmark" x="1000" y="1132">Google</text>
      </svg>

      <div class="maptype"><b>地圖</b><span>衛星檢視</span></div>
      <div class="toggles"><button>交通狀況</button><button class="mine">我的位置</button></div>
      <div class="legend">
        <h4>圖例</h4>
        <h5>交通狀況</h5>
        <p><i style="background:#5fc26a"></i>順暢</p><p><i style="background:#e67c38"></i>壅塞</p><p><i style="background:#de524d"></i>阻塞</p>
        <hr>
        <h5>衝擊波嚴重程度</h5>
        <p><i style="background:#9fdaa8"></i>輕微</p><p><i style="background:#e8cb74"></i>中等</p><p><i style="background:#e4746f"></i>高危險</p><p><i style="background:#b2403b"></i>極危險</p>
      </div>
      <div class="ctl full"><svg width="30" height="31" viewBox="0 0 30 31" fill="none" stroke="#666" stroke-width="3.500"><path d="M1.750 10.500V1.750H10M20 1.750h8.250V10.500M28.250 20.500v8.750H20M10 29.250H1.750V20.500"/></svg></div>
      <div class="quick"><button><svg class="ico" width="34" height="34"><use href="#i-mappin"/></svg></button><button class="grey"><svg class="ico" width="34" height="34"><use href="#i-refresh"/></svg></button></div>
      <div class="ctl camera"><svg width="40" height="40" viewBox="0 0 40 40" fill="none" stroke="#666" stroke-width="4"><path d="M14.500 8.500L20 3l5.500 5.500M14.500 31.500L20 37l5.500-5.500M8.500 14.500L3 20l5.500 5.500M31.500 14.500L37 20l-5.500 5.500"/></svg></div>
      <div class="ctl zoom"><svg width="28" height="28" viewBox="0 0 28 28" stroke="#666" stroke-width="4"><path d="M0 14H28M14 0V28"/></svg><hr><svg width="28" height="28" viewBox="0 0 28 28" stroke="#666" stroke-width="4"><path d="M0 14H28"/></svg></div>
      <div class="credits"><span>鍵盤快速鍵</span><span>地圖資料 ©2025 Google</span><span>條款</span><span>回報地圖錯誤</span></div>
    </div>
  </section>
</main>

<button class="api">API狀態</button>
<div class="devmark">N</div>
<div class="edge"></div>
</body>
</html>
```
FILE: styles.css
```css
* { box-sizing: border-box; margin: 0; padding: 0; }
html { height: 1668px; overflow: hidden; }
body { width: 2915px; height: 1668px; overflow: hidden; position: relative; font-family: Inter, "Noto Sans CJK TC", sans-serif; font-size: 22.8px; color: #111827; background: linear-gradient(135deg, #eff5ff 0%, #fff 50%, #f0f3ff 100%); }
button { border: 0; font: inherit; color: #fff; }
h1, h2, h3, h4, h5 { font-weight: 600; }
i { display: block; flex: none; }
.defs { position: absolute; }
.lat { letter-spacing: .6px; }
.lat.code { letter-spacing: 1.1px; }
.ico { fill: none; stroke: currentColor; stroke-width: 1.5; stroke-linecap: round; stroke-linejoin: round; flex: none; }

.topbar { height: 98px; background: rgba(255,255,255,.97); border-bottom: 2px solid #eff1f4; box-shadow: 0 17px 26px -5px rgba(0,0,0,.12), 0 7px 10px -6px rgba(0,0,0,.12); position: relative; }
.topbar-inner { width: 2066px; height: 83px; margin-left: 452px; display: flex; align-items: center; }
.logo { width: 68px; height: 68px; border-radius: 20px; background: linear-gradient(90deg, #3761e2, #4f45dc); color: #fff; display: grid; place-items: center; }
.brand { width: 222px; padding-left: 20px; white-space: nowrap; }
.brand h1 { font-size: 32.5px; font-weight: 700; line-height: 40px; margin-top: 2px; }
.brand p { font-size: 19.5px; line-height: 27px; color: #6b7280; letter-spacing: .55px; }
.pill { width: 344px; height: 47px; border-radius: 24px; background: #f5f5f7; display: flex; align-items: center; padding-left: 22px; gap: 13px; color: #374151; white-space: nowrap; margin-left: 21px; }
.pill svg { color: #3d6cf0; margin-left: -1px; }
.live { margin-left: auto; display: flex; align-items: center; gap: 13px; color: #4b5563; }
.rag { display: flex; align-items: center; gap: 7px; font-size: 19.5px; color: #4b5563; margin: 0 21px 0 14px; }
.dot { width: 14px; height: 14px; border-radius: 50%; background: #5fc26a; }
.dot.soft { background: #92d59b; }
.btn { height: 61px; border-radius: 31px; display: flex; align-items: center; gap: 14px; padding: 0 0 1px 27px; font-weight: 600; margin-right: 21px; box-shadow: 0 17px 25px -5px rgba(0,0,0,.12), 0 7px 10px -6px rgba(0,0,0,.12); white-space: nowrap; }
.violet { width: 164px; background: linear-gradient(90deg, #9038d8, #ca3b73); }
.teal { width: 164px; background: linear-gradient(90deg, #449468, #459287); }
.blue { width: 214px; background: linear-gradient(90deg, #3761e2, #4f45dc); padding-left: 41px; margin-right: 0; }
.home { color: #4b5563; stroke-width: 1.8; margin: 0 11px 0 34px; }

.layout { display: flex; align-items: flex-start; gap: 43px; height: 1528px; margin-left: 453px; padding-top: 42px; }
.side { width: 485px; display: flex; flex-direction: column; gap: 41px; }
.card { background: rgba(255,255,255,.95); border: 1px solid #f0f1f4; border-radius: 20px; box-shadow: 0 17px 25px -5px rgba(0,0,0,.11), 0 7px 10px -6px rgba(0,0,0,.11); }
.status { height: 348px; padding: 27px 28px; }
.status h2 { display: flex; align-items: center; gap: 11px; font-size: 29.3px; line-height: 48px; padding-left: 3px; }
.status dl { margin-top: 11px; }
.status dl div { display: flex; justify-content: space-between; line-height: 47.8px; color: #000; white-space: nowrap; }
.c-green { color: #4ba052; } .c-blue { color: #3c64e0; } .c-purple { color: #8b3fe0; } .c-orange { color: #dc5f2a; } .c-amber { color: #c08a2c; }

.panel { padding: 41px; margin-top: -1px; }
.panel + .panel { margin-top: 0; }
.panel-head { display: flex; align-items: center; gap: 19px; margin-bottom: 27px; }
.panel-head h2 { font-size: 29.3px; line-height: 40px; font-weight: 700; }
.badge { width: 55px; height: 55px; border-radius: 14px; display: grid; place-items: center; color: #fff; flex: none; }
.warm { background: linear-gradient(90deg, #f2cb45, #e77c35); }
.leaf { background: linear-gradient(90deg, #5ec169, #449468); }
.bold { stroke-width: 1.8; }
.glass { background: rgba(255,255,255,.2); }
.alert { position: relative; background: #fcf0f0; border: 1px solid #f9e6e5; border-left: 6px solid #de524d; border-radius: 20px; padding: 27px 20px 27px 27px; margin-bottom: 20.5px; white-space: nowrap; }
.alert:last-child { margin-bottom: 1px; }
.alert h3 { font-size: 22.8px; line-height: 33.5px; }
.alert p { font-size: 19.5px; line-height: 26px; margin-top: 6px; color: #4b5563; }
.ping { position: absolute; right: 26px; top: 26px; width: 14px; height: 14px; border-radius: 50%; background: #e1645f; }
.speed { display: flex; align-items: center; gap: 7px; margin: 13px 0 0 -1px; font-size: 19.5px; line-height: 26px; color: #6b7280; }
.forecast { height: 201px; border: 1px solid #eafaf0; border-left: 6px solid #79d98a; border-radius: 20px; background: linear-gradient(90deg, #f2fcf3, #eefcf6); padding: 27px 26px 0 27px; margin-bottom: 20px; }
.forecast.next { height: 3px; overflow: hidden; border-radius: 20px 20px 0 0; margin-bottom: -60px; border-bottom: 0; }
.forecast-head { display: flex; justify-content: space-between; align-items: center; line-height: 34px; }
.forecast-head h3 { font-size: 22.8px; }
.now { display: flex; align-items: center; gap: 7px; font-size: 19.5px; color: #4ba052; }
.now .dot { background: #6ec47a; }
.metrics { display: grid; grid-template-columns: 1fr 1fr; gap: 20px; margin-top: 14px; }
.metrics div { height: 99px; border-radius: 14px; background: rgba(255,255,255,.65); display: flex; flex-direction: column; align-items: center; padding-top: 17px; }
.metrics b { font-size: 29.3px; line-height: 40px; }
.metrics small { font-size: 19.5px; line-height: 32px; color: #4b5563; }
.side > .panel:last-child { height: 350px; border-bottom: 0; border-radius: 20px 20px 0 0; padding-bottom: 0; overflow: hidden; }

.mapcard { width: 1537px; height: 1018px; border-radius: 20px; overflow: hidden; background: #fff; border-bottom: 2px solid #f0f1f4; box-shadow: 0 40px 70px -22px rgba(0,0,0,.22); }
.map-head { height: 127px; padding: 1px 42px 0 41px; background: linear-gradient(90deg, #3761e2, #4f45dc); display: flex; align-items: center; gap: 20px; color: #fff; }
.map-title { padding-top: 5px; }
.map-title h2 { font-size: 29.3px; line-height: 38px; font-weight: 700; }
.map-title p { font-size: 19.5px; line-height: 30px; color: #d3ddfb; letter-spacing: .62px; }
.map-head ul { margin-left: auto; display: flex; gap: 21px; list-style: none; font-size: 19.5px; font-weight: 500; }
.map-head li { display: flex; align-items: center; gap: 7px; }
.map-head li i { width: 20px; height: 20px; border-radius: 50%; }
.map { position: relative; height: 880px; }
.canvas { display: block; }
.canvas path { vector-effect: non-scaling-stroke; stroke-linejoin: round; }
.grid { stroke: #aadbea; stroke-width: 1.5; }
.ferry { fill: none; stroke: #77c0de; stroke-width: 1.8; stroke-dasharray: 14 7; }
.water { stroke: #9fd8ea; stroke-linejoin: round; }
.thin, .rural, .border, .arterial, .casing, .motorway, .median, .slow, .jam, .metro, .metro-case { fill: none; }
.thin { stroke: #a3aecd; stroke-width: 1.5; }
.rural { stroke: #a7b2d2; stroke-width: 4; }
.border { stroke: #6d7a77; stroke-width: 1.8; stroke-dasharray: 6 6; }
.arterial { stroke: #69dc9c; stroke-width: 9.5; }
.casing { stroke: #4aa472; stroke-width: 16.5; }
.motorway { stroke: #69dc9c; stroke-width: 14; }
.median { stroke: #55bd85; stroke-width: 1; stroke-dasharray: 22 12; }
.slow { stroke: #f4cb5a; stroke-width: 9; }
.jam { stroke: #dc5549; stroke-width: 8.5; }
.metro { stroke-width: 4; stroke-linecap: round; }
.metro-case { filter: drop-shadow(0 0 1.5px #fff) drop-shadow(0 0 1px #fff) drop-shadow(0 0 1px #fff); }
.num { font: 17px "Noto Sans", "Noto Sans CJK TC", sans-serif; text-anchor: middle; dominant-baseline: central; fill: #333; }
.num.white { fill: #e9f0fb; }
.places { font: 20px "Noto Sans CJK TC", sans-serif; text-anchor: middle; dominant-baseline: central; fill: #35393d; stroke: #fff; stroke-width: 4px; paint-order: stroke; stroke-linejoin: round; }
.halo { fill: rgba(222,82,77,.13); stroke: rgba(222,82,77,.3); stroke-width: 2; }
.markers { stroke: #fff; stroke-width: 3.5; }
.gmark { font: 500 29px "Open Sans", sans-serif; fill: #fff; stroke: #8a948f; stroke-width: 3px; paint-order: stroke; }

.maptype, .toggles, .legend, .ctl, .quick, .credits { position: absolute; }
.maptype { left: 17px; top: 17px; width: 300px; height: 68px; display: flex; background: #fff; border-radius: 3px; box-shadow: 0 2px 7px rgba(0,0,0,.25); font-family: Roboto, "Noto Sans CJK TC", sans-serif; font-size: 30.5px; line-height: 68px; text-align: center; overflow: hidden; }
.maptype b { width: 119px; font-weight: 500; color: #000; box-shadow: 1px 0 3px rgba(0,0,0,.2); }
.maptype span { flex: 1; color: #565656; }
.toggles { left: 28px; top: 136px; width: 159px; height: 136px; padding: 14px 13px; border-radius: 14px; background: #fff; display: flex; flex-direction: column; gap: 14px; box-shadow: 0 17px 25px -5px rgba(0,0,0,.15), 0 7px 10px -6px rgba(0,0,0,.15); }
.toggles button { height: 47px; border-radius: 7px; background: #4e80ee; padding-bottom: 1px; }
.toggles .mine { background: #5fc26a; }
.legend { left: 28px; top: 454px; width: 178px; height: 399px; padding: 21px 20px; border-radius: 14px; background: #fff; box-shadow: 0 17px 25px -5px rgba(0,0,0,.15); font-size: 19.5px; line-height: 26px; white-space: nowrap; color: #000; }
.legend h4 { font-size: 22.8px; line-height: 34px; margin-bottom: 12px; }
.legend h5 { font-size: 19.5px; font-weight: 400; color: #4b5563; margin-bottom: 6px; }
.legend p { display: flex; align-items: center; gap: 14px; font-weight: 500; margin-bottom: 6.8px; }
.legend p i { width: 20px; height: 20px; border-radius: 50%; }
.legend hr { border: 0; border-top: 2px solid #e5e7eb; margin: 14px 0 13px; }
.ctl { background: #fff; border-radius: 3px; box-shadow: 0 2px 7px rgba(0,0,0,.25); display: grid; place-items: center; }
.full { left: 1452px; top: 17px; width: 68px; height: 68px; }
.camera { left: 1452px; top: 578px; width: 68px; height: 68px; border-radius: 50%; }
.zoom { left: 1452px; top: 700px; width: 68px; height: 138px; grid-template-rows: 68px 2px 68px; }
.zoom hr { border: 0; width: 52px; height: 2px; background: #e6e6e6; }
.quick { left: 1448px; top: 135px; display: grid; gap: 13px; }
.quick button { width: 75px; height: 75px; border-radius: 14px; background: rgba(255,255,255,.92); color: #3761e2; display: grid; place-items: center; box-shadow: 0 17px 25px -5px rgba(0,0,0,.14), 0 7px 10px -6px rgba(0,0,0,.14); }
.quick svg { stroke-width: 2; }
.quick .grey { color: #4b5563; }
.credits { right: 0; bottom: 0; display: flex; gap: 2px; font: 17.9px/24px Roboto, "Noto Sans CJK TC", sans-serif; color: #000; }
.credits span { background: rgba(237,241,246,.82); padding: 0 9.3px; height: 24px; white-space: nowrap; }

.api { position: absolute; left: 17px; top: 1589px; width: 149px; height: 53px; border-radius: 13px; background: #3761e2; font-size: 19.5px; text-align: right; padding: 0 21px 2px 0; box-shadow: 0 17px 25px -5px rgba(0,0,0,.12); }
.devmark { position: absolute; left: 22px; top: 1572px; width: 65px; height: 65px; border-radius: 50%; background: #171c2c; border: 2px solid #15181f; box-shadow: inset 0 0 0 3px #3a4052, 0 8px 20px rgba(0,0,0,.2); color: #fff; font-size: 28px; font-weight: 400; line-height: 61px; text-align: center; }
.edge { position: absolute; right: 0; top: 1190px; width: 3px; height: 30px; border-radius: 100% 0 0 100% / 50%; background: #fff; box-shadow: 0 8px 24px rgba(0,0,0,.12); }
```
